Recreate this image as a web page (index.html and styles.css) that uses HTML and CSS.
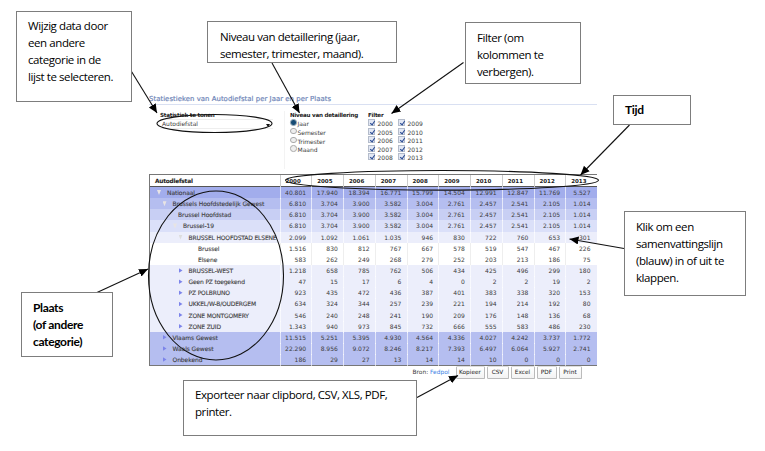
FILE: index.html
```
<!DOCTYPE html>
<html lang="nl">
<head>
<meta charset="utf-8">
<title>Statiestieken van Autodiefstal</title>
<link rel="stylesheet" href="styles.css">
</head>
<body>
<main class="report">
  <h1>Statiestieken van Autodiefstal per Jaar en per Plaats</h1>
  <section class="controls">
    <div class="statistic">
      <b>Statistiek te tonen</b>
      <div class="select"><span>Autodiefstal</span><i></i></div>
    </div>
    <div class="detail">
      <b>Niveau van detaillering</b>
      <label><i class="radio on"></i>Jaar</label>
      <label><i class="radio"></i>Semester</label>
      <label><i class="radio"></i>Trimester</label>
      <label><i class="radio"></i>Maand</label>
    </div>
    <div class="filter">
      <b>Filter</b>
      <div class="years">
        <label><i class="check"></i>2000</label><label><i class="check"></i>2009</label>
        <label><i class="check"></i>2005</label><label><i class="check"></i>2010</label>
        <label><i class="check"></i>2006</label><label><i class="check"></i>2011</label>
        <label><i class="check"></i>2007</label><label><i class="check"></i>2012</label>
        <label><i class="check"></i>2008</label><label><i class="check"></i>2013</label>
      </div>
    </div>
  </section>
  <section class="table">
    <div class="row head"><b>Autodiefstal</b><span>2000</span><span>2005</span><span>2006</span><span>2007</span><span>2008</span><span>2009</span><span>2010</span><span>2011</span><span>2012</span><span>2013</span></div>
    <div class="row l0 open"><b>Nationaal</b><span>40.801</span><span>17.940</span><span>18.394</span><span>16.771</span><span>15.799</span><span>14.504</span><span>12.991</span><span>12.847</span><span>11.769</span><span>5.527</span></div>
    <div class="row l1 open"><b>Brussels Hoofdstedelijk Gewest</b><span>6.810</span><span>3.704</span><span>3.900</span><span>3.582</span><span>3.004</span><span>2.761</span><span>2.457</span><span>2.541</span><span>2.105</span><span>1.014</span></div>
    <div class="row l2 open"><b>Brussel Hoofdstad</b><span>6.810</span><span>3.704</span><span>3.900</span><span>3.582</span><span>3.004</span><span>2.761</span><span>2.457</span><span>2.541</span><span>2.105</span><span>1.014</span></div>
    <div class="row l3 open"><b>Brussel-19</b><span>6.810</span><span>3.704</span><span>3.900</span><span>3.582</span><span>3.004</span><span>2.761</span><span>2.457</span><span>2.541</span><span>2.105</span><span>1.014</span></div>
    <div class="row l4 open"><b>BRUSSEL HOOFDSTAD ELSENE</b><span>2.099</span><span>1.092</span><span>1.061</span><span>1.035</span><span>946</span><span>830</span><span>722</span><span>760</span><span>653</span><span>301</span></div>
    <div class="row l5"><b>Brussel</b><span>1.516</span><span>830</span><span>812</span><span>767</span><span>667</span><span>578</span><span>519</span><span>547</span><span>467</span><span>226</span></div>
    <div class="row l5"><b>Elsene</b><span>583</span><span>262</span><span>249</span><span>268</span><span>279</span><span>252</span><span>203</span><span>213</span><span>186</span><span>75</span></div>
    <div class="row l4 closed"><b>BRUSSEL-WEST</b><span>1.218</span><span>658</span><span>785</span><span>762</span><span>506</span><span>434</span><span>425</span><span>496</span><span>299</span><span>180</span></div>
    <div class="row l4 closed"><b>Geen PZ toegekend</b><span>47</span><span>15</span><span>17</span><span>6</span><span>4</span><span>0</span><span>2</span><span>2</span><span>19</span><span>2</span></div>
    <div class="row l4 closed"><b>PZ POLBRUNO</b><span>923</span><span>435</span><span>472</span><span>436</span><span>387</span><span>401</span><span>383</span><span>338</span><span>320</span><span>153</span></div>
    <div class="row l4 closed"><b>UKKEL/W-B/OUDERGEM</b><span>634</span><span>324</span><span>344</span><span>257</span><span>239</span><span>221</span><span>194</span><span>214</span><span>192</span><span>80</span></div>
    <div class="row l4 closed"><b>ZONE MONTGOMERY</b><span>546</span><span>240</span><span>248</span><span>241</span><span>190</span><span>209</span><span>176</span><span>148</span><span>136</span><span>68</span></div>
    <div class="row l4 closed"><b>ZONE ZUID</b><span>1.343</span><span>940</span><span>973</span><span>845</span><span>732</span><span>666</span><span>555</span><span>583</span><span>486</span><span>230</span></div>
    <div class="row l1 closed"><b>Vlaams Gewest</b><span>11.515</span><span>5.251</span><span>5.395</span><span>4.930</span><span>4.564</span><span>4.336</span><span>4.027</span><span>4.242</span><span>3.737</span><span>1.772</span></div>
    <div class="row l1 closed"><b>Waals Gewest</b><span>22.290</span><span>8.956</span><span>9.072</span><span>8.246</span><span>8.217</span><span>7.393</span><span>6.497</span><span>6.064</span><span>5.927</span><span>2.741</span></div>
    <div class="row l1 closed"><b>Onbekend</b><span>186</span><span>29</span><span>27</span><span>13</span><span>14</span><span>14</span><span>10</span><span>0</span><span>0</span><span>0</span></div>
  </section>
  <footer>
    <span class="source">Bron: <a>Fedpol</a></span>
    <button class="copy">Kopieer</button><button class="csv">CSV</button><button class="excel">Excel</button><button class="pdf">PDF</button><button class="print">Print</button>
  </footer>
</main>

<svg class="marks" width="765" height="451" viewBox="0 0 765 451">
  <defs><marker id="tip" markerUnits="userSpaceOnUse" markerWidth="10" markerHeight="9" refX="9" refY="4" orient="auto"><path d="M0 0L9 4L0 8z"/></marker></defs>
  <g fill="none" stroke="#111" stroke-width="1.1">
    <ellipse cx="214.500" cy="123.500" rx="57.500" ry="9"/>
    <ellipse cx="442" cy="180.300" rx="156.500" ry="9.800"/>
    <ellipse cx="216" cy="275.500" rx="67.500" ry="84.500"/>
    <g marker-end="url(#tip)">
      <path d="M131.500 71.500L157 113"/>
      <path d="M272 63L299.500 113"/>
      <path d="M463.500 62.500L391.500 113.500"/>
      <path d="M629.500 125L580.500 175"/>
      <path d="M624 248.500L569.500 239"/>
      <path d="M97 292.500L148 269"/>
      <path d="M417 397.500L458 375.500"/>
    </g>
  </g>
</svg>

<aside class="note data">Wijzig data door<br>een andere<br>categorie in de<br>lijst te selecteren.</aside>
<aside class="note level">Niveau van detaillering (jaar,<br>semester, trimester, maand).</aside>
<aside class="note columns">Filter (om<br>kolommen te<br>verbergen).</aside>
<aside class="note time">Tijd</aside>
<aside class="note fold">Klik om een<br>samenvattingslijn<br>(blauw) in of uit te<br>klappen.</aside>
<aside class="note place">Plaats<br>(of andere<br>categorie)</aside>
<aside class="note export">Exporteer naar clipbord, CSV, XLS, PDF,<br>printer.</aside>
</body>
</html>
```
FILE: styles.css
```
* { box-sizing: border-box; }
body {
  margin: 0;
  width: 765px;
  height: 451px;
  overflow: hidden;
  position: relative;
  background: #fff;
  color: #3c3c3c;
  font: 6px/8px "DejaVu Sans", sans-serif;
}
i { display: block; flex: none; }
.report { width: 448px; margin-left: 149px; padding-top: 94px; }
h1 {
  margin: 0;
  height: 11px;
  border-bottom: 1.5px solid #d9e0f2;
  color: #6f86b8;
  font-size: 6.900px;
  letter-spacing: .04px;
  line-height: 10px;
  font-weight: 400;
  -webkit-text-stroke: .2px #6f86b8;
  white-space: nowrap;
}
.controls { display: flex; height: 69px; padding-top: 6px; }
.controls b { display: block; height: 8px; color: #222; font-size: 5.600px; letter-spacing: -.240px; white-space: nowrap; }
.statistic { width: 136px; height: 58px; padding-left: 11px; border-right: 1px solid #f3f3f3; }
.select {
  display: flex;
  justify-content: space-between;
  width: 113px;
  height: 10px;
  padding: 0 3px 0 2px;
  border: solid #eee;
  border-width: 1px 0;
}
.select i { margin-top: 4px; border: 2px solid transparent; border-top: 3px solid #111; }
.detail { width: 79px; padding-left: 5px; }
.detail label { display: flex; height: 8.800px; line-height: 9.400px; letter-spacing: -.05px; }
.radio { width: 6.500px; height: 6.500px; margin-right: 1px; border: 1px solid #aaa; border-radius: 50%; background: #eee; }
.radio.on { border-color: #9fb0ba; background: #164c75; }
.filter { padding-left: 4px; }
.years { display: grid; grid-template-columns: 30px 30px; grid-auto-rows: 8.600px; }
.years label { display: flex; line-height: 10px; }
.check { width: 7px; height: 7px; margin-right: 2.500px; border: 1px solid #b4bccb; background: #e3e8f4; }
.check::after { content: ""; display: block; width: 2px; height: 4px; margin: 0 0 0 1.500px; border: solid #2c4c94; border-width: 0 1px 1px 0; transform: rotate(35deg); }
.table { height: 192px; border: solid #777; border-width: 1px 0 1px 1px; }
.row {
  display: grid;
  grid-template-columns: 129.500px repeat(9, 31.750px) 1fr;
  height: 11.150px;
  line-height: 12.200px;
  white-space: nowrap;
}
.row b { overflow: hidden; font-weight: 400; display: flex; letter-spacing: -.08px; -webkit-text-stroke: .1px #3c3c3c; }
.row span { border-left: 1px solid rgba(255, 255, 255, .65); padding-right: 5.200px; text-align: right; }
.row span:last-child { padding-right: 6.500px; }
.row.head { height: 12px; border-bottom: 1.500px solid #555; color: #222; font-weight: 700; line-height: 12px; }
.row.head b { padding-left: 5px; font-weight: 700; font-size: 5.800px; letter-spacing: -.200px; }
.row.head span { border-color: #ccc; padding-right: 10.500px; font-size: 5.500px; }
.l0 { background: #a2adec; }
.l1 { background: #b5bef0; }
.l2 { background: #c8cff4; }
.l3 { background: #dbe0f9; }
.l4 { background: #eceefb; }
.l5 { background: #fff; }
.l5 span { border-color: #eee; }
.l0 b { padding-left: 7px; }
.l1 b { padding-left: 12.500px; }
.l2 b { padding-left: 18px; }
.l3 b { padding-left: 23px; }
.l4 b { padding-left: 28.500px; }
.row.l4 b { letter-spacing: -.170px; }
.l5 b { padding-left: 48px; }
.open b::before, .closed b::before { content: ""; flex: none; width: 4px; height: 5px; margin: 3px 6px 0 0; background: #e8e4e4; clip-path: polygon(0 0, 100% 0, 50% 100%); }
.l2 b::before { opacity: .3; }
.l4.open b::before { background: #ddd; }
.closed b::before { background: #7c84ea; clip-path: polygon(0 0, 100% 50%, 0 100%); }
footer { display: flex; height: 14px; padding-left: 263.500px; }
.source { width: 43px; line-height: 13px; white-space: nowrap; font-size: 5.900px; }
.source a { color: #397fe5; }
button {
  height: 13px;
  margin: 0 2px 0 0;
  padding: 0;
  border: 1px solid #bbb;
  border-top-color: #ddd;
  border-radius: 1.500px;
  background: linear-gradient(#fff, #f3f3f3);
  color: #222;
  font: 5.800px/11px "DejaVu Sans", sans-serif;
}
.copy { width: 29px; }
.csv { width: 22px; }
.excel { width: 24px; }
.pdf { width: 20px; }
.print { width: 23px; }
.marks { position: absolute; inset: 0; }
.marks marker path { fill: #000; stroke: none; }
.note {
  position: absolute;
  border: 1px solid #7d7d7d;
  background: #fff;
  color: #000;
  padding: 8px 0 0 11px;
  font: 11.500px/17px "Open Sans", sans-serif;
  letter-spacing: -.420px;
  white-space: nowrap;
  overflow: hidden;
}
.data { left: 16px; top: 11px; width: 116px; height: 91px; padding-top: 5px; }
.level { left: 207px; top: 21px; width: 190px; height: 42px; padding: 6px 0 0 12px; }
.columns { left: 465px; top: 22px; width: 116px; height: 62px; padding-top: 6px; }
.time { left: 613px; top: 95px; width: 78px; height: 30px; padding-top: 5px; }
.fold { left: 624px; top: 211px; width: 122px; height: 85px; padding-top: 6px; }
.place { left: 21px; top: 292px; width: 92px; height: 65px; padding-top: 6px; }
.time, .place { font-family: Lato, sans-serif; font-size: 12px; font-weight: 700; letter-spacing: -.350px; }
.export { left: 183px; top: 380px; width: 234px; height: 56px; padding-top: 5px; }
```
